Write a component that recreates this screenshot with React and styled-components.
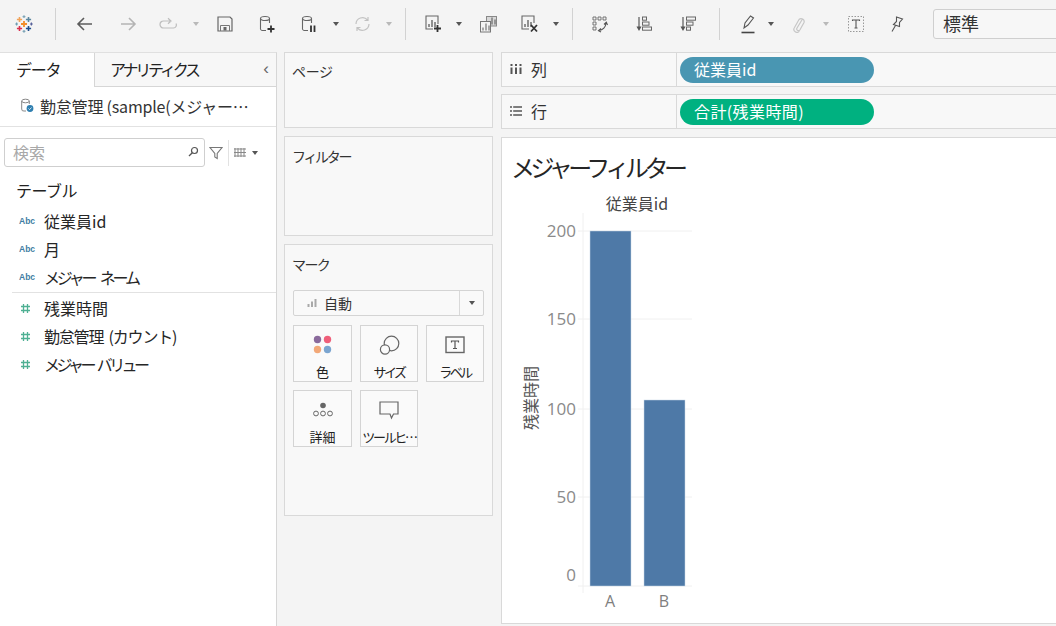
import styled, { createGlobalStyle } from "styled-components";

const GlobalStyle = createGlobalStyle`
  html, body {
    margin: 0;
    padding: 0;
    background: #f4f4f4;
    overflow: hidden;
  }
  * {
    box-sizing: border-box;
  }
  body {
    font-family: "Noto Sans CJK JP", "Open Sans", sans-serif;
    color: #2b2b2b;
  }
`;

const Page = styled.div`
  width: 1056px;
  height: 626px;
  display: flex;
  flex-direction: column;
  overflow: hidden;
`;

const Toolbar = styled.div`
  height: 50px;
  flex: none;
  display: flex;
  align-items: center;
  padding-bottom: 2px;
  background: #f4f4f4;
`;

const ToolSlot = styled.div`
  width: ${(p) => p.$w}px;
  flex: none;
  height: 30px;
  display: flex;
  align-items: center;
  justify-content: center;
`;

const ToolSep = styled.div`
  width: 1px;
  height: 32px;
  background: #d2d2d2;
`;

const Caret = styled.div`
  width: 0;
  height: 0;
  border-left: 3px solid transparent;
  border-right: 3px solid transparent;
  border-top: 4px solid ${(p) => (p.$off ? "#b9b9b9" : "#555")};
`;

const SizeSelect = styled.div`
  flex: none;
  margin-left: 17px;
  width: 150px;
  height: 30px;
  border: 1px solid #cfcfcf;
  border-radius: 3px;
  padding: 0 0 2px 9px;
  display: flex;
  align-items: center;
  font-size: 18px;
  color: #333;
  background: #f7f7f7;
`;

const Body = styled.div`
  flex: 1;
  display: flex;
  min-height: 0;
  background: #f4f4f4;
`;

const Sidebar = styled.aside`
  width: 277px;
  flex: none;
  margin-top: 2px;
  background: #fff;
  border-right: 1px solid #d6d6d6;
  border-top: 1px solid #e0e0e0;
  display: flex;
  flex-direction: column;
`;

const TabRow = styled.div`
  height: 34px;
  flex: none;
  display: flex;
`;

const Tab = styled.div`
  width: ${(p) => p.$w}px;
  display: flex;
  align-items: center;
  padding: 0 0 2px ${(p) => p.$pad}px;
  font-size: 16px;
  letter-spacing: ${(p) => p.$ls}px;
  background: ${(p) => (p.$active ? "#fff" : "#f7f7f7")};
  border-left: ${(p) => (p.$active ? "none" : "1px solid #d6d6d6")};
  border-bottom: ${(p) => (p.$active ? "none" : "1px solid #d6d6d6")};
  justify-content: space-between;
  color: #222;
`;

const Collapse = styled.span`
  font-size: 17px;
  letter-spacing: 0;
  color: #666;
  padding-right: 7px;
  font-family: "Liberation Sans", sans-serif;
`;

const SourceRow = styled.div`
  height: 40px;
  flex: none;
  display: flex;
  align-items: center;
  gap: 5px;
  padding: 0 0 2px 20px;
  border-bottom: 1px solid #e2e2e2;
  font-size: 16px;
  color: #333;
  letter-spacing: -0.2px;
`;

const SearchRow = styled.div`
  display: flex;
  align-items: center;
  padding: 11px 0 0 4px;
  flex: none;
`;

const SearchBox = styled.div`
  width: 201px;
  height: 29px;
  border: 1px solid #cfcfcf;
  border-radius: 3px;
  display: flex;
  align-items: center;
  justify-content: space-between;
  padding: 0 5px 2px 8px;
  font-size: 16px;
  color: #a8a8a8;
`;

const SearchTools = styled.div`
  display: flex;
  align-items: center;
  margin-left: 4px;
  gap: 5px;
`;

const VSep = styled.div`
  width: 1px;
  height: 26px;
  background: #e2e2e2;
`;

const SectionTitle = styled.div`
  font-size: 16px;
  line-height: 24px;
  padding: 11px 0 0 16px;
  letter-spacing: -0.5px;
  color: #222;
`;

const FieldList = styled.div`
  display: flex;
  flex-direction: column;
  margin-top: ${(p) => p.$top}px;
  border-top: ${(p) => (p.$rule ? "1px solid #e2e2e2" : "none")};
  margin-left: ${(p) => (p.$rule ? 12 : 0)}px;
  padding-top: ${(p) => (p.$rule ? 1 : 0)}px;
`;

const FieldRow = styled.div`
  height: 28px;
  display: flex;
  align-items: center;
  padding-left: ${(p) => (p.$inset ? 8 : 19)}px;
  font-size: 16px;
  color: #262626;
`;

const FieldIcon = styled.span`
  width: ${(p) => (p.$inset ? 24 : 25)}px;
  flex: none;
  display: flex;
  font-family: "Liberation Sans", sans-serif;
  font-size: 8.5px;
  font-weight: 700;
  color: #3f7ea3;
`;

const FieldName = styled.span`
  letter-spacing: ${(p) => p.$ls || 0}px;
  word-spacing: ${(p) => p.$ws || 0}px;
`;

const Middle = styled.div`
  width: 224px;
  flex: none;
  padding: 2px 8px 0 7px;
  display: flex;
  flex-direction: column;
  gap: 8px;
`;

const Card = styled.section`
  height: ${(p) => p.$h}px;
  flex: none;
  background: #f8f8f8;
  border: 1px solid #d9d9d9;
  padding: ${(p) => p.$pt}px 8px 0 8px;
`;

const CardTitle = styled.div`
  margin-left: -1px;
  font-size: 14px;
  line-height: 21px;
  color: #333;
  letter-spacing: ${(p) => p.$ls}px;
`;

const MarkSelect = styled.div`
  margin-top: 15px;
  height: 26px;
  border: 1px solid #d4d4d4;
  border-radius: 2px;
  background: #f9f9f9;
  display: flex;
  align-items: center;
`;

const MarkValue = styled.div`
  flex: 1;
  display: flex;
  align-items: center;
  gap: 6px;
  padding-left: 13px;
  height: 100%;
  font-size: 14px;
  color: #333;
  border-right: 1px solid #d9d9d9;
`;

const MarkCaret = styled.div`
  width: 23px;
  display: flex;
  justify-content: center;
`;

const TileGrid = styled.div`
  margin-top: 9px;
  display: grid;
  grid-template-columns: 59px 58px 58px;
  grid-auto-rows: 57px;
  column-gap: 8px;
  row-gap: 8px;
`;

const Tile = styled.div`
  border: 1px solid #d4d4d4;
  background: #fafafa;
  display: flex;
  flex-direction: column;
  align-items: center;
  padding-top: 7px;
  font-size: 13px;
  color: #222;
`;

const TileIcon = styled.div`
  height: 24px;
  margin-bottom: 5px;
  display: flex;
  align-items: center;
  justify-content: center;
`;

const TileLabel = styled.div`
  text-align: center;
  white-space: nowrap;
  letter-spacing: ${(p) => p.$ls || 0}px;
`;

const Right = styled.div`
  flex: 1;
  min-width: 0;
  padding-top: 2px;
  display: flex;
  flex-direction: column;
`;

const Shelf = styled.div`
  height: ${(p) => p.$h}px;
  flex: none;
  margin-bottom: ${(p) => p.$gap}px;
  display: flex;
  background: #f8f8f8;
  border: 1px solid #d9d9d9;
  border-right: none;
`;

const ShelfLabel = styled.div`
  width: 175px;
  flex: none;
  display: flex;
  align-items: center;
  gap: 9px;
  padding: 0 0 2px 8px;
  border-right: 1px solid #d9d9d9;
  font-size: 16px;
  color: #333;
`;

const ShelfBody = styled.div`
  flex: 1;
  display: flex;
  align-items: center;
  padding-left: 3px;
`;

const Pill = styled.div`
  width: 194px;
  height: 26px;
  border-radius: 13px;
  background: ${(p) => p.$bg};
  color: #fff;
  display: flex;
  align-items: center;
  padding: 0 0 2px 14px;
  font-size: 16px;
  letter-spacing: ${(p) => p.$ls || 0}px;
`;

const View = styled.div`
  flex: none;
  height: 487px;
  background: #fff;
  border: 1px solid #d9d9d9;
  border-right: none;
  padding-top: 11px;
`;

const ViewTitle = styled.h1`
  margin: 0;
  padding-left: 9px;
  font-size: 24px;
  line-height: 36px;
  font-weight: 400;
  letter-spacing: -4.5px;
  color: #262626;
`;

const ColumnHeader = styled.div`
  width: 108px;
  margin: 9px 0 0 81px;
  height: 19px;
  line-height: 18px;
  text-align: center;
  font-size: 16px;
  color: #444;
`;

const Chart = styled.svg`
  display: block;
`;

const Icon = ({ w = 22, h = 22, children, vb }) => (
  <svg width={w} height={h} viewBox={vb || `0 0 ${w} ${h}`} fill="none">
    {children}
  </svg>
);

const LogoCross = ({ x, y, r, c, sw = 1.6 }) => (
  <path
    d={`M${x - r} ${y}H${x + r}M${x} ${y - r}V${y + r}`}
    stroke={c}
    strokeWidth={sw}
  />
);

const Logo = () => (
  <Icon w={18} h={18}>
    <LogoCross x={9} y={9} r={3} c="#f28e2b" sw={1.8} />
    <LogoCross x={4.5} y={4.5} r={2.6} c="#f0a35a" />
    <LogoCross x={13.5} y={4.5} r={2.6} c="#5b879f" />
    <LogoCross x={4.5} y={13.5} r={2.6} c="#d9304f" />
    <LogoCross x={13.5} y={13.5} r={2.6} c="#1f4e8c" />
    <LogoCross x={9} y={1.6} r={1.4} c="#7fa6b8" sw={1.2} />
    <LogoCross x={9} y={16.4} r={1.4} c="#7fa6b8" sw={1.2} />
    <LogoCross x={1.6} y={9} r={1.4} c="#6f9db3" sw={1.2} />
    <LogoCross x={16.4} y={9} r={1.4} c="#56609a" sw={1.2} />
  </Icon>
);

const Arrow = ({ flip, color }) => (
  <Icon w={18} h={16}>
    <path
      d={flip ? "M2 8H16M10 2L16 8L10 14" : "M16 8H2M8 2L2 8L8 14"}
      stroke={color}
      strokeWidth="1.6"
    />
  </Icon>
);

const RedoIcon = () => (
  <Icon w={20} h={14}>
    <path
      d="M11 4H4.5A3 3 0 0 0 4.5 11H14.5A3 3 0 0 0 17 6.5M9 1.2L12 4L9 6.8"
      stroke="#bdbdbd"
      strokeWidth="1.2"
    />
  </Icon>
);

const SaveIcon = () => (
  <Icon w={16} h={16}>
    <path d="M1 1H13L15 3V15H1Z" stroke="#666" strokeWidth="1.2" />
    <path d="M3.5 15V9.5H12.5V15" stroke="#777" />
    <rect x="6.5" y="11" width="3" height="3.5" fill="#666" />
  </Icon>
);

const DbBase = () => (
  <>
    <ellipse cx="6" cy="3.5" rx="4.5" ry="2" stroke="#666" strokeWidth="1.1" />
    <path d="M1.5 3.5V13A2 2 0 0 0 3.5 15.5H7M10.5 3.5V8" stroke="#666" strokeWidth="1.1" />
  </>
);

const DbPlus = () => (
  <Icon w={17} h={18}>
    <DbBase />
    <path d="M8.5 14H15.5M12 10.5V17.5" stroke="#333" strokeWidth="1.8" />
  </Icon>
);

const DbPause = () => (
  <Icon w={17} h={18}>
    <DbBase />
    <path d="M10 10.5V17M13.5 10.5V17" stroke="#333" strokeWidth="1.8" />
  </Icon>
);

const RefreshIcon = () => (
  <Icon w={17} h={16}>
    <path
      d="M2 8A6.5 6.5 0 0 1 13.5 4M15 8A6.5 6.5 0 0 1 3.5 12M14 1V4.5H10.5M3 15V11.5H6.5"
      stroke="#c2c2c2"
      strokeWidth="1.2"
    />
  </Icon>
);

const MiniBars = ({ x = 4, y = 11, color = "#666" }) => (
  <path
    d={`M${x} ${y}v-3M${x + 3} ${y}v-7M${x + 6} ${y}v-5`}
    stroke={color}
    strokeWidth="1.4"
  />
);

const ChartPlus = () => (
  <Icon w={17} h={18}>
    <path d="M8 14H1V1H13V9" stroke="#666" strokeWidth="1.1" />
    <MiniBars y={12} />
    <path d="M9 13.5H16M12.5 10V17" stroke="#333" strokeWidth="1.8" />
  </Icon>
);

const ChartClear = () => (
  <Icon w={18} h={18}>
    <path d="M8 14H1V1H13V8" stroke="#666" strokeWidth="1.1" />
    <MiniBars y={12} />
    <path d="M10 10L16 16.5M16 10L10 16.5" stroke="#333" strokeWidth="1.8" />
  </Icon>
);

const DuplicateSheet = () => (
  <Icon w={17} h={17}>
    <rect x="6.5" y="0.5" width="10" height="9.5" fill="#d8d8d8" stroke="#888" />
    <MiniBars x={9} y={8.5} color="#777" />
    <rect x="0.5" y="5.5" width="10" height="10.5" fill="#f4f4f4" stroke="#777" />
    <MiniBars x={3} y={14.5} color="#888" />
  </Icon>
);

const SwapIcon = () => (
  <Icon w={16} h={17}>
    <path
      d="M1 1h3v3H1zM6 1h3v3H6zM11 1h3v3h-3zM1 6h3v3H1zM1 11h3v3H1z"
      stroke="#666"
      strokeWidth="0.9"
    />
    <path d="M14 7A8 8 0 0 1 7 14.5M12 8.5L14.3 6.3L15.5 9M9 12.5L6.5 14.7L9 16" stroke="#555" strokeWidth="1.1" />
  </Icon>
);

const SortIcon = ({ descending }) => (
  <Icon w={16} h={16}>
    <path d="M3 1V13" stroke="#666" strokeWidth="1.3" />
    <path d="M0.5 10.5H5.5L3 15Z" fill="#555" />
    {descending ? (
      <>
        <rect x="6.5" y="1" width="9" height="3.2" stroke="#666" />
        <rect x="6.5" y="6" width="6.5" height="3.2" stroke="#666" />
        <rect x="6.5" y="11" width="4" height="3.2" stroke="#666" />
      </>
    ) : (
      <>
        <rect x="6.5" y="1" width="4" height="3.2" stroke="#666" />
        <rect x="6.5" y="6" width="6.5" height="3.2" stroke="#666" />
        <rect x="6.5" y="11" width="9" height="3.2" stroke="#666" />
      </>
    )}
  </Icon>
);

const Highlighter = () => (
  <Icon w={14} h={19}>
    <path d="M3 13L4 8L9.5 1L12.5 3L7 10L3 13Z" stroke="#555" strokeWidth="1.1" />
    <path d="M0.5 17.5H13.5" stroke="#444" strokeWidth="1.6" />
  </Icon>
);

const Clip = () => (
  <Icon w={12} h={18}>
    <path
      d="M9.5 4L4 13A1.7 1.7 0 0 0 7 14.8L11 7.5A3 3 0 0 0 6 4.5L1.5 12.5A3 3 0 0 0 6.5 16"
      stroke="#c6c6c6"
      strokeWidth="1.2"
    />
  </Icon>
);

const TextBox = () => (
  <Icon w={16} h={16}>
    <rect x="0.5" y="0.5" width="15" height="15" stroke="#999" strokeDasharray="1.5 1.5" />
    <path d="M4.5 5V4H11.5V5M8 4V12M6.5 12H9.5" stroke="#555" strokeWidth="1.1" />
  </Icon>
);

const PinIcon = () => (
  <Icon w={14} h={17}>
    <path
      d="M6.5 1L12.5 3L9.5 6.5L9.5 10.5L3.5 8.5L6.5 5.5ZM5.5 9.5L2 15.5"
      stroke="#555"
      strokeWidth="1.1"
    />
  </Icon>
);

const SourceIcon = () => (
  <Icon w={15} h={15}>
    <ellipse cx="5.5" cy="3" rx="3.8" ry="1.8" stroke="#888" />
    <path d="M1.7 3V11A2 2 0 0 0 4 13H6M9.3 3V6" stroke="#888" />
    <circle cx="10" cy="10.5" r="3.4" fill="#2f7fb0" />
    <path d="M8.5 10.5L9.6 11.6L11.5 9.5" stroke="#fff" strokeWidth="0.8" />
  </Icon>
);

const SearchGlass = () => (
  <Icon w={11} h={11}>
    <circle cx="6.5" cy="4.5" r="3" stroke="#555" strokeWidth="1.2" />
    <path d="M4.3 6.7L1 10" stroke="#555" strokeWidth="1.3" />
  </Icon>
);

const FunnelIcon = () => (
  <Icon w={14} h={14}>
    <path d="M1 1.5H13L8.2 7.5V12.5L5.8 11V7.5Z" stroke="#777" strokeWidth="1.1" />
  </Icon>
);

const ListGrid = () => (
  <Icon w={13} h={9}>
    <path
      d="M1 0V9M4 0V9M7 0V9M10 0V9M0 1H12M0 4.5H12M0 8H12"
      stroke="#888"
      strokeWidth="1"
    />
  </Icon>
);

const HashIcon = () => (
  <Icon w={11} h={11}>
    <path
      d="M3.5 1V10M7.5 1V10M1 3.5H10M1 7.5H10"
      stroke="#4fb093"
      strokeWidth="1.3"
    />
  </Icon>
);

const BarTiny = () => (
  <Icon w={11} h={10}>
    <path d="M1.5 9V6M5 9V3.5M8.5 9V1" stroke="#a9a9a9" strokeWidth="2" />
  </Icon>
);

const ColorDots = () => (
  <Icon w={20} h={20}>
    <circle cx="4.5" cy="4.5" r="3.7" fill="#8a6a9c" />
    <circle cx="14.5" cy="4.5" r="3.7" fill="#ef5f7a" />
    <circle cx="4.5" cy="14.5" r="3.7" fill="#f2a878" />
    <circle cx="14.5" cy="14.5" r="3.7" fill="#7ba5d0" />
  </Icon>
);

const SizeCircles = () => (
  <Icon w={21} h={21}>
    <circle cx="12.5" cy="8.5" r="7.3" stroke="#666" strokeWidth="1.2" />
    <circle cx="6" cy="14.5" r="4.6" fill="#fafafa" stroke="#666" strokeWidth="1.2" />
  </Icon>
);

const LabelT = () => (
  <Icon w={20} h={18}>
    <rect x="1" y="1" width="18" height="15.5" stroke="#666" strokeWidth="1.4" />
    <path d="M6.5 6.5V5H13.5V6.5M10 5V12.5M8 12.5H12" stroke="#555" strokeWidth="1.2" />
  </Icon>
);

const DetailDots = () => (
  <Icon w={22} h={16}>
    <circle cx="11" cy="3.5" r="2.8" fill="#666" />
    <circle cx="4" cy="11.5" r="2.4" stroke="#666" />
    <circle cx="11" cy="11.5" r="2.4" stroke="#666" />
    <circle cx="18" cy="11.5" r="2.4" stroke="#666" />
  </Icon>
);

const Bubble = () => (
  <Icon w={20} h={19}>
    <path d="M1 1H19V13H14.5L12.5 17L11 13H1Z" stroke="#666" strokeWidth="1.2" />
  </Icon>
);

const ColumnsIcon = () => (
  <Icon w={12} h={12}>
    <path d="M1.5 4.5V11M6 4.5V11M10.5 4.5V11" stroke="#555" strokeWidth="2" />
    <path d="M1.5 1V3M6 1V3M10.5 1V3" stroke="#555" strokeWidth="2" />
  </Icon>
);

const RowsIcon = () => (
  <Icon w={12} h={12}>
    <path d="M0 2H2M0 6H2M0 10H2" stroke="#555" strokeWidth="1.6" />
    <path d="M3.2 2H12M3.2 6H12M3.2 10H12" stroke="#555" strokeWidth="1.6" />
  </Icon>
);

const tools = [
  { w: 48, el: <Logo /> },
  { w: 14, el: <ToolSep /> },
  { w: 46, el: <Arrow color="#5c5c5c" /> },
  { w: 40, el: <Arrow flip color="#b4b4b4" /> },
  { w: 42, el: <RedoIcon /> },
  { w: 12, el: <Caret $off /> },
  { w: 46, el: <SaveIcon /> },
  { w: 38, el: <DbPlus /> },
  { w: 46, el: <DbPause /> },
  { w: 8, el: <Caret /> },
  { w: 44, el: <RefreshIcon /> },
  { w: 10, el: <Caret $off /> },
  { w: 22, el: <ToolSep /> },
  { w: 34, el: <ChartPlus /> },
  { w: 18, el: <Caret /> },
  { w: 40, el: <DuplicateSheet /> },
  { w: 44, el: <ChartClear /> },
  { w: 8, el: <Caret /> },
  { w: 24, el: <ToolSep /> },
  { w: 32, el: <SwapIcon /> },
  { w: 56, el: <SortIcon /> },
  { w: 32, el: <SortIcon descending /> },
  { w: 30, el: <ToolSep /> },
  { w: 28, el: <Highlighter /> },
  { w: 18, el: <Caret /> },
  { w: 38, el: <Clip /> },
  { w: 16, el: <Caret $off /> },
  { w: 44, el: <TextBox /> },
  { w: 38, el: <PinIcon /> },
];

const dimensions = [
  { name: "従業員id" },
  { name: "月" },
  { name: "メジャー ネーム", ls: -3.2, ws: 5 },
];

const measures = [
  { name: "残業時間" },
  { name: "勤怠管理 (カウント)", ls: -1.2, ws: 3 },
  { name: "メジャー バリュー", ls: -3.6, ws: 4 },
];

const markTiles = [
  { label: "色", icon: <ColorDots /> },
  { label: "サイズ", ls: -2.5, icon: <SizeCircles /> },
  { label: "ラベル", ls: -2.5, icon: <LabelT /> },
  { label: "詳細", icon: <DetailDots /> },
  { label: "ツールヒ…", ls: -2.3, icon: <Bubble /> },
];

// chart coordinates are local to the svg, which starts at x=502 y=213
const ticks = [
  { label: "200", y: 18, textY: 24 },
  { label: "150", y: 106, textY: 112 },
  { label: "100", y: 196, textY: 202 },
  { label: "50", y: 284, textY: 290 },
  { label: "0", y: 373, textY: 368 },
];

const bars = [
  { label: "A", x: 88, top: 18 },
  { label: "B", x: 142, top: 187 },
];

const BarChart = () => (
  <Chart width="200" height="402" viewBox="0 0 200 402">
    <path d="M81 0V380" stroke="#f0f0f0" />
    {ticks.map((t) => (
      <path key={t.label} d={`M76 ${t.y}H190`} stroke="#f0f0f0" />
    ))}
    {ticks.map((t) => (
      <text
        key={t.label}
        x="74"
        y={t.textY}
        textAnchor="end"
        fontSize="17"
        fontFamily="Open Sans, sans-serif"
        fill="#8a8a8a"
      >
        {t.label}
      </text>
    ))}
    {bars.map((b) => (
      <g key={b.label}>
        <rect
          x={b.x}
          y={b.top}
          width="41"
          height={373 - b.top}
          fill="#4e79a7"
          stroke="#c7d6e6"
          strokeWidth="0.5"
        />
        <text
          x={b.x + 20}
          y="394"
          textAnchor="middle"
          fontSize="16"
          fontFamily="Open Sans, sans-serif"
          fill="#7f7f7f"
        >
          {b.label}
        </text>
      </g>
    ))}
    <text
      transform="translate(35 185) rotate(-90)"
      textAnchor="middle"
      fontSize="16"
      fontFamily="Noto Sans CJK JP, sans-serif"
      fill="#555"
    >
      残業時間
    </text>
  </Chart>
);

const App = () => (
  <Page>
    <GlobalStyle />
    <Toolbar>
      {tools.map((t, i) => (
        <ToolSlot key={i} $w={t.w}>
          {t.el}
        </ToolSlot>
      ))}
      <SizeSelect>標準</SizeSelect>
    </Toolbar>
    <Body>
      <Sidebar>
        <TabRow>
          <Tab $active $w={94} $pad={16} $ls={-1.3}>
            データ
          </Tab>
          <Tab $w={182} $pad={15} $ls={-3.2}>
            アナリティクス
            <Collapse>‹</Collapse>
          </Tab>
        </TabRow>
        <SourceRow>
          <SourceIcon />
          勤怠管理 (sample(メジャー…
        </SourceRow>
        <SearchRow>
          <SearchBox>
            検索
            <SearchGlass />
          </SearchBox>
          <SearchTools>
            <FunnelIcon />
            <VSep />
            <ListGrid />
            <Caret />
          </SearchTools>
        </SearchRow>
        <SectionTitle>テーブル</SectionTitle>
        <FieldList $top={5}>
          {dimensions.map((f) => (
            <FieldRow key={f.name}>
              <FieldIcon>Abc</FieldIcon>
              <FieldName $ls={f.ls} $ws={f.ws}>
                {f.name}
              </FieldName>
            </FieldRow>
          ))}
        </FieldList>
        <FieldList $top={1} $rule>
          {measures.map((f) => (
            <FieldRow key={f.name} $inset>
              <FieldIcon $inset>
                <HashIcon />
              </FieldIcon>
              <FieldName $ls={f.ls} $ws={f.ws}>
                {f.name}
              </FieldName>
            </FieldRow>
          ))}
        </FieldList>
      </Sidebar>
      <Middle>
        <Card $h={76} $pt={8}>
          <CardTitle $ls={-0.3}>ページ</CardTitle>
        </Card>
        <Card $h={100} $pt={9}>
          <CardTitle $ls={-2.3}>フィルター</CardTitle>
        </Card>
        <Card $h={272} $pt={9}>
          <CardTitle $ls={-1.6}>マーク</CardTitle>
          <MarkSelect>
            <MarkValue>
              <BarTiny />
              自動
            </MarkValue>
            <MarkCaret>
              <Caret />
            </MarkCaret>
          </MarkSelect>
          <TileGrid>
            {markTiles.map((t) => (
              <Tile key={t.label}>
                <TileIcon>{t.icon}</TileIcon>
                <TileLabel $ls={t.ls}>{t.label}</TileLabel>
              </Tile>
            ))}
          </TileGrid>
        </Card>
      </Middle>
      <Right>
        <Shelf $h={35} $gap={7}>
          <ShelfLabel>
            <ColumnsIcon />列
          </ShelfLabel>
          <ShelfBody>
            <Pill $bg="#4996b2">従業員id</Pill>
          </ShelfBody>
        </Shelf>
        <Shelf $h={35} $gap={8}>
          <ShelfLabel>
            <RowsIcon />行
          </ShelfLabel>
          <ShelfBody>
            <Pill $bg="#00b180" $ls={0.4}>
              合計(残業時間)
            </Pill>
          </ShelfBody>
        </Shelf>
        <View>
          <ViewTitle>メジャーフィルター</ViewTitle>
          <ColumnHeader>従業員id</ColumnHeader>
          <BarChart />
        </View>
      </Right>
    </Body>
  </Page>
);

export default App;
